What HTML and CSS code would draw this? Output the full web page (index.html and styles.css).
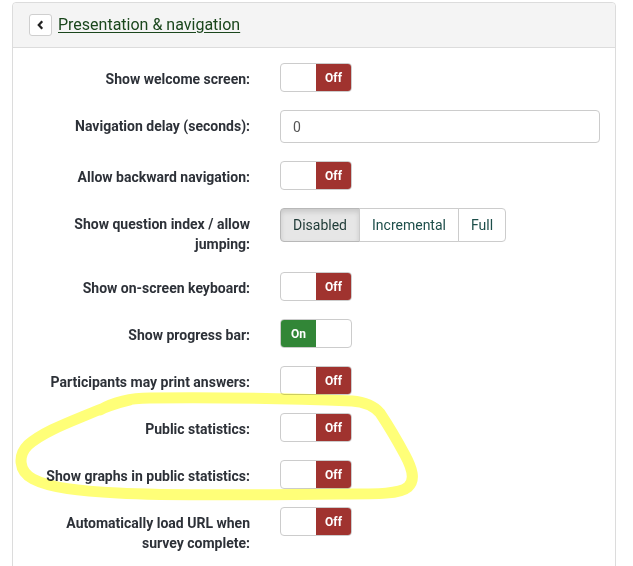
FILE: index.html
```html
<!DOCTYPE html>
<html lang="en">
<head>
  <meta charset="UTF-8">
  <meta name="viewport" content="width=device-width, initial-scale=1.0">
  <title>Survey settings | Presentation &amp; navigation</title>
  <link rel="stylesheet" href="styles.css">
</head>
<body>
  <div class="page">
    <div class="panel">
      <div class="panel-heading">
        <button class="back-btn" type="button" aria-label="Back">
          <svg viewBox="0 0 10 14" class="chevron">
            <path d="M7.5 1.5 L2.5 7 L7.5 12.5" fill="none" stroke="#222" stroke-width="3.2" stroke-linejoin="miter"/>
          </svg>
        </button>
        <a class="panel-title" href="#">Presentation &amp; navigation</a>
      </div>

      <div class="panel-body">
        <div class="form-row">
          <label class="form-label">Show welcome screen:</label>
          <div class="form-field">
            <span class="switch is-off"><span class="switch-blank"></span><span class="switch-off">Off</span></span>
          </div>
        </div>

        <div class="form-row">
          <label class="form-label">Navigation delay (seconds):</label>
          <div class="form-field">
            <input class="text-input" type="text" value="0">
          </div>
        </div>

        <div class="form-row">
          <label class="form-label">Allow backward navigation:</label>
          <div class="form-field">
            <span class="switch is-off"><span class="switch-blank"></span><span class="switch-off">Off</span></span>
          </div>
        </div>

        <div class="form-row">
          <label class="form-label">Show question index / allow jumping:</label>
          <div class="form-field">
            <div class="btn-group">
              <button class="btn active" type="button">Disabled</button>
              <button class="btn" type="button">Incremental</button>
              <button class="btn" type="button">Full</button>
            </div>
          </div>
        </div>

        <div class="form-row">
          <label class="form-label">Show on-screen keyboard:</label>
          <div class="form-field">
            <span class="switch is-off"><span class="switch-blank"></span><span class="switch-off">Off</span></span>
          </div>
        </div>

        <div class="form-row">
          <label class="form-label">Show progress bar:</label>
          <div class="form-field">
            <span class="switch is-on"><span class="switch-on">On</span><span class="switch-blank"></span></span>
          </div>
        </div>

        <div class="form-row">
          <label class="form-label">Participants may print answers:</label>
          <div class="form-field">
            <span class="switch is-off"><span class="switch-blank"></span><span class="switch-off">Off</span></span>
          </div>
        </div>

        <div class="form-row">
          <label class="form-label">Public statistics:</label>
          <div class="form-field">
            <span class="switch is-off"><span class="switch-blank"></span><span class="switch-off">Off</span></span>
          </div>
        </div>

        <div class="form-row">
          <label class="form-label">Show graphs in public statistics:</label>
          <div class="form-field">
            <span class="switch is-off"><span class="switch-blank"></span><span class="switch-off">Off</span></span>
          </div>
        </div>

        <div class="form-row">
          <label class="form-label">Automatically load URL when survey complete:</label>
          <div class="form-field">
            <span class="switch is-off"><span class="switch-blank"></span><span class="switch-off">Off</span></span>
          </div>
        </div>
      </div>
    </div>

    <!-- marker stroke drawn around the statistics options -->
    <svg class="marker" viewBox="0 0 633 566" width="633" height="566">
      <path d="M100 410
               C 114 402, 128 398, 150 398
               C 220 397, 300 399, 352 401
               C 366 402, 374 406, 380 413
               C 390 428, 398 442, 405 455
               C 412 468, 416 480, 408 487
               C 400 494, 380 494, 340 494
               C 260 495, 170 496, 118 493
               C 80 491, 50 488, 33 479
               C 18 471, 18 455, 28 445
               C 42 433, 62 425, 84 416
               C 98 410, 112 404, 130 400"
            fill="none" stroke="#ffff78" stroke-width="11" stroke-linecap="round" stroke-linejoin="round"/>
    </svg>
  </div>
</body>
</html>
```

FILE: styles.css
```css
* {
  margin: 0;
  padding: 0;
  box-sizing: border-box;
}

html,
body {
  height: 100%;
  overflow: hidden;
}

body {
  font-family: 'Roboto', 'Liberation Sans', sans-serif;
  font-size: 14px;
  line-height: 20px;
  color: #2d3138;
  background: #fff;
}

.page {
  position: relative;
  padding: 2px 17px 0 12px;
}

.panel {
  border: 1px solid #dcdcdc;
  border-radius: 4px;
  background: #fff;
}

.panel-heading {
  display: flex;
  align-items: center;
  height: 45px;
  padding-left: 16px;
  background: #f4f4f4;
  border-bottom: 1px solid #dcdcdc;
  border-radius: 4px 4px 0 0;
}

.back-btn {
  display: flex;
  align-items: center;
  justify-content: center;
  width: 23px;
  height: 22px;
  background: #fff;
  border: 1px solid #cfcfcf;
  border-radius: 3px;
  cursor: pointer;
}

.chevron {
  width: 7px;
  height: 10px;
}

.panel-title {
  margin-left: 6px;
  font-size: 16px;
  color: #1a461c;
  text-decoration: underline;
  text-underline-offset: 2px;
}

.panel-body {
  padding: 15px 0 20px;
}

.form-row {
  display: grid;
  grid-template-columns: 252px 1fr;
  margin-bottom: 18px;
}

.form-label {
  padding: 7px 15px 0;
  text-align: right;
  font-weight: 700;
  line-height: 19.5px;
}

.form-field {
  padding: 0 15px;
}

/* on/off switch */
.switch {
  display: flex;
  width: 72px;
  height: 29px;
  border: 1px solid #cccccc;
  border-radius: 4px;
  overflow: hidden;
  background: #fff;
}

.switch span {
  flex: 1;
  display: flex;
  align-items: center;
  justify-content: center;
  font-size: 12px;
  font-weight: 700;
  color: #fff;
}

.switch-off {
  background: #a0332f;
}

.switch-on {
  background: #328637;
}

.text-input {
  display: block;
  width: 100%;
  height: 33px;
  padding: 0 12px;
  border: 1px solid #cccccc;
  border-radius: 4px;
  font-family: inherit;
  font-size: 14px;
  color: #555;
  outline: none;
}

/* segmented button group */
.btn-group {
  display: inline-flex;
}

.btn {
  height: 34px;
  padding: 0 12px;
  font-family: inherit;
  font-size: 14px;
  color: #1d4e4a;
  background: #fff;
  border: 1px solid #cccccc;
  margin-left: -1px;
  cursor: pointer;
}

.btn:first-child {
  margin-left: 0;
  border-radius: 4px 0 0 4px;
}

.btn:last-child {
  border-radius: 0 4px 4px 0;
}

.btn.active {
  background: #e6e6e6;
  border-color: #b8b8b8;
  box-shadow: inset 0 3px 5px rgba(0, 0, 0, 0.125);
  color: #1e3a36;
}

.marker {
  position: absolute;
  top: 0;
  left: 0;
  pointer-events: none;
  mix-blend-mode: multiply;
}
```
